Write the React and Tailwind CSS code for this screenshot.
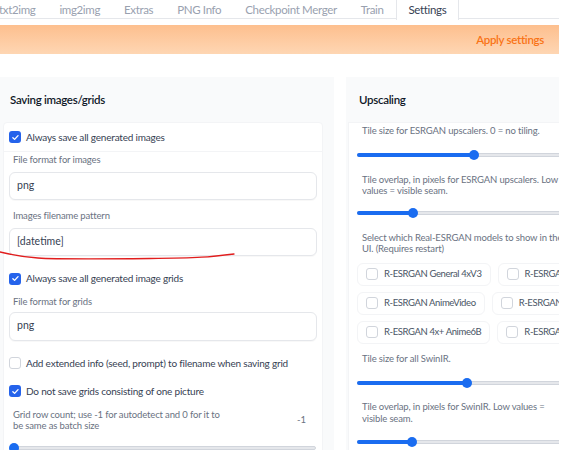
import React from "react";

const tabs = ["txt2img", "img2img", "Extras", "PNG Info", "Checkpoint Merger", "Train", "Settings"];

const Check = ({ checked }) =>
  checked ? (
    <span className="flex h-[12px] w-[12px] shrink-0 items-center justify-center rounded-[3px] bg-[#2563eb]">
      <svg viewBox="0 0 12 12" className="h-[9px] w-[9px]">
        <path d="M2.5 6.3l2.3 2.2 4.6-5" fill="none" stroke="white" strokeWidth="1.8" strokeLinecap="round" strokeLinejoin="round" />
      </svg>
    </span>
  ) : (
    <span className="h-[12px] w-[12px] shrink-0 rounded-[3px] border border-gray-300 bg-white" />
  );

const CheckRow = ({ checked, label, className = "" }) => (
  <div className={`flex items-center gap-[5px] pl-[5px] text-[10px] tracking-[-0.2px] text-gray-700 ${className}`}>
    <Check checked={checked} />
    <span>{label}</span>
  </div>
);

const Label = ({ children, className = "" }) => (
  <div className={`text-[9.5px] leading-[11.5px] tracking-[-0.15px] text-gray-500 ${className}`}>{children}</div>
);

const TextBox = ({ value, className = "" }) => (
  <div className={`mx-[5px] flex h-[28px] items-center rounded-[6px] border border-gray-200 bg-white px-[7px] text-[10.5px] text-gray-700 shadow-[0_1px_1px_rgba(0,0,0,0.03)] ${className}`}>
    {value}
  </div>
);

// value is the thumb's distance in px from the track start
const Slider = ({ value, width, className = "" }) => (
  <div className={`relative h-[12px] ${className}`} style={{ width }}>
    <div className="absolute left-0 right-0 top-[4px] h-[4px] rounded-full border border-gray-300 bg-gray-200" />
    <div className="absolute left-0 top-[4px] h-[4px] rounded-full bg-[#1a6cf0]" style={{ width: value }} />
    <div className="absolute top-[1px] h-[10px] w-[10px] rounded-full bg-[#1a6cf0]" style={{ left: value - 5 }} />
  </div>
);

const Model = ({ label }) => (
  <div className="flex h-[23px] shrink-0 items-center gap-[6px] rounded-[6px] border border-gray-100 bg-white pl-[8px] pr-[8px] text-[9.5px] tracking-[-0.4px] text-gray-600">
    <Check checked={false} />
    <span className="whitespace-nowrap">{label}</span>
  </div>
);

export default function App() {
  return (
    <div className="relative h-[450px] w-[565px] overflow-hidden bg-white font-['Lato',sans-serif]">
      <div className="w-[559px]">
        {/* Tabs */}
        <div className="flex h-[19px] border-b border-gray-200">
          <div className="-ml-[13px] flex">
            {tabs.map((tab) => (
              <div
                key={tab}
                className={`flex h-[19px] items-center px-[12px] text-[11.5px] tracking-[-0.35px] ${
                  tab === "Settings"
                    ? "mb-[-1px] h-[20px] border-x border-gray-200 bg-white text-gray-700"
                    : "text-gray-400"
                }`}
              >
                {tab}
              </div>
            ))}
          </div>
        </div>

        {/* Apply bar */}
        <div className="mt-[6px] flex h-[29px] items-center justify-end bg-gradient-to-b from-[#fdbf8e] to-[#fed6b3] pr-[15px]">
          <span className="text-[11.5px] font-semibold tracking-[-0.3px] text-[#f97316]">Apply settings</span>
        </div>

        {/* Panels */}
        <div className="mt-[23px] flex gap-[12px]">
          {/* Left */}
          <div className="h-[380px] w-[334px] shrink-0 bg-[#f9fafb] pl-[3px] pr-[11px]">
            <div className="flex h-[45px] items-center pl-[7px] text-[11.5px] font-semibold tracking-[-0.3px] text-gray-900">
              Saving images/grids
            </div>
            <div className="relative h-[340px] rounded-t-[4px] border border-gray-100 bg-white">
              <CheckRow checked label="Always save all generated images" className="h-[29px] border-b border-gray-100" />
              <Label className="mt-[2px] pl-[9px]">File format for images</Label>
              <TextBox value="png" className="mt-[6px]" />
              <Label className="mt-[10px] pl-[9px]">Images filename pattern</Label>
              <TextBox value="[datetime]" className="mt-[7px]" />
              <CheckRow checked label="Always save all generated image grids" className="mt-[15px]" />
              <Label className="mt-[10px] pl-[9px]">File format for grids</Label>
              <TextBox value="png" className="mt-[4px] h-[29px]" />
              <CheckRow label="Add extended info (seed, prompt) to filename when saving grid" className="mt-[15px]" />
              <CheckRow checked label="Do not save grids consisting of one picture" className="mt-[13px]" />
              <div className="mt-[10px] flex items-center pr-[16px]">
                <Label className="flex-1 pl-[9px]">
                  Grid row count; use -1 for autodetect and 0 for it to
                  <br />
                  be same as batch size
                </Label>
                <span className="text-[9.5px] text-gray-500">-1</span>
              </div>
              <Slider value={1} width={303} className="ml-[9px] mt-[10px]" />

              {/* hand-drawn red underline */}
              <svg className="pointer-events-none absolute left-[-4px] top-[127px] h-[12px] w-[240px]" viewBox="0 0 240 12">
                <path d="M0 2 C 12 5, 24 7, 38 8 S 100 9, 150 8.5 S 210 7, 234 4" fill="none" stroke="#e11d1d" strokeWidth="1.3" strokeLinecap="round" />
              </svg>
            </div>
          </div>

          {/* Right */}
          <div className="h-[380px] flex-1 overflow-hidden bg-[#f9fafb] pl-[2px]">
            <div className="flex h-[45px] items-center pl-[11px] text-[11.5px] font-semibold tracking-[-0.3px] text-gray-900">
              Upscaling
            </div>
            <div className="h-[340px] w-[320px] border border-gray-100 bg-white pl-[8px] pt-[2px]">
              <Label className="pl-[5px]">Tile size for ESRGAN upscalers. 0 = no tiling.</Label>
              <Slider value={117} width={300} className="mt-[12px]" />
              <Label className="mt-[13px] pl-[5px]">
                Tile overlap, in pixels for ESRGAN upscalers. Low
                <br />
                values = visible seam.
              </Label>
              <Slider value={56} width={300} className="mt-[10px]" />
              <Label className="mt-[13px] pl-[5px]">
                Select which Real-ESRGAN models to show in the
                <br />
                UI. (Requires restart)
              </Label>
              <div className="mt-[8px] flex flex-col gap-[6px]">
                <div className="flex gap-[7px]">
                  <Model label="R-ESRGAN General 4xV3" />
                  <Model label="R-ESRGAN General WDN 4xV3" />
                </div>
                <div className="flex gap-[7px]">
                  <Model label="R-ESRGAN AnimeVideo" />
                  <Model label="R-ESRGAN 4x+" />
                </div>
                <div className="flex gap-[7px]">
                  <Model label="R-ESRGAN 4x+ Anime6B" />
                  <Model label="R-ESRGAN 2x+" />
                </div>
              </div>
              <Label className="mt-[9px] pl-[5px]">Tile size for all SwinIR.</Label>
              <Slider value={110} width={300} className="mt-[13px]" />
              <Label className="mt-[12px] pl-[5px]">
                Tile overlap, in pixels for SwinIR. Low values =
                <br />
                visible seam.
              </Label>
              <Slider value={55} width={300} className="mt-[12px]" />
            </div>
          </div>
        </div>
      </div>
    </div>
  );
}
